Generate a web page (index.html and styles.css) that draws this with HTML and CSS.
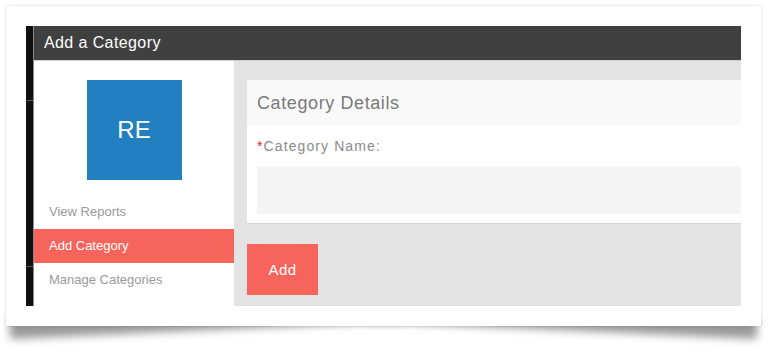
FILE: index.html
```html
<!DOCTYPE html>
<html>
<head>
    <title>Add a Category</title>
    <link rel="stylesheet" href="styles.css">
</head>
<body>
    <div class="page">
        <div class="sheet">
            <div class="app">
                <div class="strip">
                    <span class="strip-line first"></span>
                    <span class="strip-line second"></span>
                </div>
                <div class="main">
                    <div class="topbar">Add a Category</div>
                    <div class="body">
                        <div class="sidebar">
                            <div class="avatar">RE</div>
                            <ul class="nav">
                                <li><a href="#">View Reports</a></li>
                                <li class="active"><a href="#">Add Category</a></li>
                                <li><a href="#">Manage Categories</a></li>
                            </ul>
                        </div>
                        <div class="content">
                            <div class="panel">
                                <div class="panel-head">Category Details</div>
                                <div class="panel-body">
                                    <label for="catName"><span class="req">*</span>Category Name:</label>
                                    <input type="text" id="catName">
                                </div>
                            </div>
                            <button class="btn-add">Add</button>
                        </div>
                    </div>
                </div>
            </div>
        </div>
    </div>
</body>
</html>
```

FILE: styles.css
```css
body {
    margin: 0;
    background: #fff;
    font-family: "Liberation Sans", Arial, sans-serif;
}
.page {
    position: relative;
    z-index: 0;
    padding: 6px 0 30px 6px;
}
.sheet {
    position: relative;
    width: 715px;
    height: 280px;
    padding: 20px;
    background: #fff;
    box-shadow: 0 0 3px rgba(0, 0, 0, 0.18);
}
/* curled paper shadow */
.sheet::before,
.sheet::after {
    content: "";
    position: absolute;
    z-index: -1;
    bottom: 12px;
    width: 52%;
    height: 20px;
    background: #888;
    box-shadow: 0 16px 9px rgba(0, 0, 0, 0.4);
}
.sheet::before {
    left: 3px;
    transform: rotate(-2.6deg);
}
.sheet::after {
    right: 3px;
    transform: rotate(2.6deg);
}
.app {
    display: flex;
    height: 280px;
}
.strip {
    position: relative;
    width: 7px;
    background: #111;
    border-right: 1px solid #8a8a8a;
}
.strip-line {
    position: absolute;
    left: 0;
    width: 7px;
    height: 1px;
    background: #555;
}
.strip-line.first { top: 74px; }
.strip-line.second { top: 240px; }
.main {
    flex: 1;
    display: flex;
    flex-direction: column;
}
.topbar {
    height: 34px;
    line-height: 34px;
    padding-left: 10px;
    background: #404040;
    color: #fff;
    font-size: 16px;
    letter-spacing: 0.4px;
    border-bottom: 1px solid #cfcfcf;
}
.body {
    flex: 1;
    display: flex;
}
.sidebar {
    width: 200px;
    background: #fff;
    display: flex;
    flex-direction: column;
    align-items: center;
}
.avatar {
    width: 95px;
    height: 100px;
    margin-top: 19px;
    background: #2280c0;
    color: #fff;
    font-size: 24px;
    display: flex;
    align-items: center;
    justify-content: center;
}
.nav {
    list-style: none;
    margin: 15px 0 0;
    padding: 0;
    width: 100%;
}
.nav li {
    height: 34px;
}
.nav a {
    display: block;
    line-height: 34px;
    padding-left: 15px;
    font-size: 13px;
    color: #9a9a9a;
    text-decoration: none;
}
.nav li.active {
    background: #f6645b;
}
.nav li.active a {
    color: #fff;
}
.content {
    flex: 1;
    background: #e3e3e3;
    padding: 19px 0 0 13px;
}
.panel {
    background: #fff;
    border-bottom: 1px solid #d6d6d6;
}
.panel-head {
    height: 45px;
    line-height: 46px;
    padding-left: 10px;
    background: #f9f9f9;
    color: #7a7a7a;
    font-size: 18px;
    letter-spacing: 0.6px;
}
.panel-body {
    padding: 13px 0 9px 10px;
}
.panel-body label {
    display: block;
    font-size: 14px;
    color: #8a8a8a;
    letter-spacing: 1.1px;
    margin-bottom: 12px;
}
.req {
    color: #d62a2a;
}
.panel-body input {
    display: block;
    box-sizing: border-box;
    width: 100%;
    height: 48px;
    border: none;
    background: #f4f4f4;
    outline: none;
}
.btn-add {
    margin-top: 20px;
    width: 71px;
    height: 51px;
    border: none;
    background: #f6645b;
    color: #fff;
    font-family: "Liberation Sans", Arial, sans-serif;
    font-size: 15px;
    letter-spacing: 0.4px;
}
```
